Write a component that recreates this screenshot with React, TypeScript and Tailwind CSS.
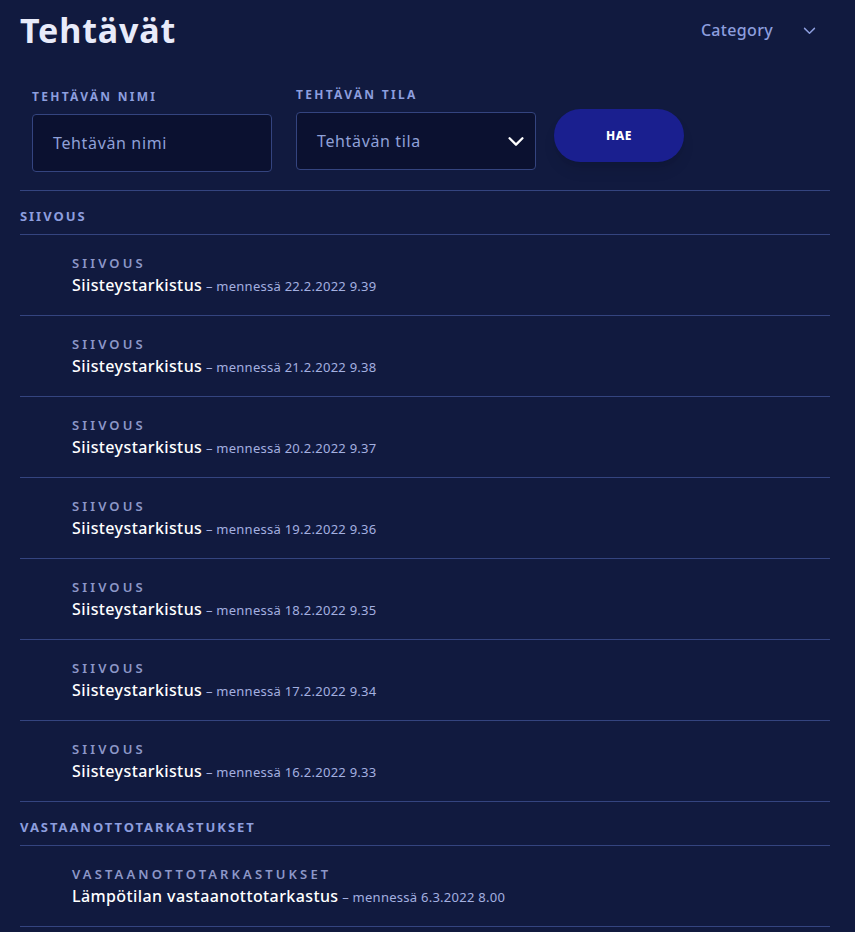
import React from "react";

type Task = { category: string; title: string; due: string };

const groups: { name: string; tasks: Task[] }[] = [
  {
    name: "SIIVOUS",
    tasks: [
      "22.2.2022 9.39",
      "21.2.2022 9.38",
      "20.2.2022 9.37",
      "19.2.2022 9.36",
      "18.2.2022 9.35",
      "17.2.2022 9.34",
      "16.2.2022 9.33",
    ].map((due) => ({ category: "SIIVOUS", title: "Siisteystarkistus", due })),
  },
  {
    name: "VASTAANOTTOTARKASTUKSET",
    tasks: [
      {
        category: "VASTAANOTTOTARKASTUKSET",
        title: "Lämpötilan vastaanottotarkastus",
        due: "6.3.2022 8.00",
      },
    ],
  },
];

function Chevron({ className, width = 2 }: { className?: string; width?: number }) {
  return (
    <svg
      viewBox="0 0 24 24"
      fill="none"
      stroke="currentColor"
      strokeWidth={width}
      strokeLinecap="round"
      strokeLinejoin="round"
      className={className}
    >
      <path d="M5 9l7 7 7-7" />
    </svg>
  );
}

export default function App() {
  return (
    <div className="min-h-screen bg-[#111a3f] pl-5 pr-[25px] font-['Noto_Sans',sans-serif]">
      <header className="flex items-center justify-between h-[60px]">
        <h1 className="text-[34px] font-bold text-[#e8ebfa] tracking-wide">Tehtävät</h1>
        <button className="flex items-center gap-7 pr-[12px] text-[16px] font-medium tracking-[0.02em] text-[#8d9ede]">
          Category
          <Chevron className="w-[17px] h-[17px]" />
        </button>
      </header>

      <div className="flex items-start gap-6 pl-3 pt-[26px] pb-[18px] border-b border-[#34447f]">
        <div className="flex flex-col gap-2 mt-[2px]">
          <label className="text-[12px] font-bold tracking-[0.19em] text-[#8d9ede]">
            TEHTÄVÄN NIMI
          </label>
          <div className="w-[240px] h-[58px] rounded border border-[#34447f] bg-[#0b1130] flex items-center px-5 text-[16px] tracking-[0.04em] text-[#8fa0d8]">
            Tehtävän nimi
          </div>
        </div>
        <div className="flex flex-col gap-2">
          <label className="text-[12px] font-bold tracking-[0.19em] text-[#8d9ede]">
            TEHTÄVÄN TILA
          </label>
          <div className="w-[240px] h-[58px] rounded border border-[#34447f] bg-[#0b1130] flex items-center justify-between pl-5 pr-2 text-[16px] tracking-[0.04em] text-[#8fa0d8]">
            Tehtävän tila
            <Chevron className="w-[22px] h-[22px] text-white" width={2.5} />
          </div>
        </div>
        <button className="mt-[23px] -ml-[6px] w-[130px] h-[53px] rounded-full bg-[#1a1f8f] shadow-lg text-white text-[12px] font-extrabold tracking-wider">
          HAE
        </button>
      </div>

      {groups.map((g) => (
        <section key={g.name}>
          <div className="h-[44px] flex items-center pt-[9px] border-b border-[#34447f] text-[13px] font-bold tracking-[0.15em] text-[#8d9ede]">
            {g.name}
          </div>
          {g.tasks.map((t, i) => (
            <div
              key={i}
              className="h-[81px] border-b border-[#34447f] pl-[52px] pt-[18px]"
            >
              <div className="text-[13px] font-semibold tracking-[0.24em] text-[#8d97c8] leading-[20px]">
                {t.category}
              </div>
              <div className="leading-[24px]">
                <span className="text-[16px] font-medium tracking-[0.025em] text-white">{t.title}</span>
                <span className="text-[13px] tracking-[0.02em] text-[#a4b0e0]"> – mennessä {t.due}</span>
              </div>
            </div>
          ))}
        </section>
      ))}
    </div>
  );
}
